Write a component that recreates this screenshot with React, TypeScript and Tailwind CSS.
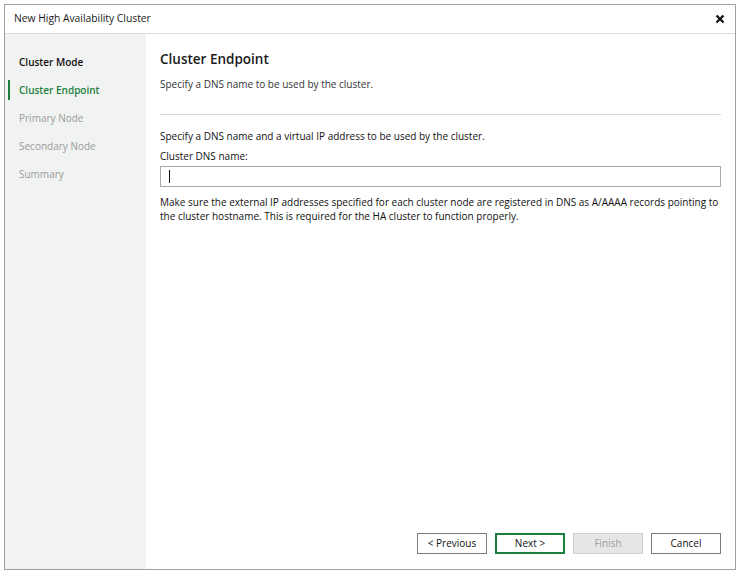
import React from "react";

const steps = [
  { label: "Cluster Mode", state: "done" },
  { label: "Cluster Endpoint", state: "active" },
  { label: "Primary Node", state: "todo" },
  { label: "Secondary Node", state: "todo" },
  { label: "Summary", state: "todo" },
];

export default function App() {
  return (
    <div
      className="w-[740px] h-[575px] bg-white pt-[4px] pl-[4px]"
      style={{ fontFamily: '"Open Sans", "Noto Sans", sans-serif' }}
    >
      <div className="w-[732px] h-[566px] border border-[#a0a0a0] flex flex-col bg-white">
        {/* title bar */}
        <div className="h-[29px] flex items-center justify-between pl-[9px] pr-[10px] border-b border-[#dcdcdc] shrink-0">
          <span className="text-[10.3px] text-[#1a1a1a]">New High Availability Cluster</span>
          <svg width="10" height="10" viewBox="0 0 10 10">
            <path d="M1.5 1.5 L8.5 8.5 M8.5 1.5 L1.5 8.5" stroke="#111" strokeWidth="2.2" />
          </svg>
        </div>

        <div className="flex flex-1 min-h-0">
          {/* sidebar */}
          <div className="w-[141px] bg-[#f1f2f2] pt-[14px] flex flex-col shrink-0">
            {steps.map((s) => (
              <div key={s.label} className="h-[28px] flex items-center relative pl-[14px]">
                {s.state === "active" && (
                  <span className="absolute left-[3px] top-[4px] w-[2px] h-[20px] bg-[#1a7f3c]" />
                )}
                <span
                  className={
                    "text-[10px] " +
                    (s.state === "done"
                      ? "text-[#111] font-semibold"
                      : s.state === "active"
                      ? "text-[#1a7f3c] font-semibold"
                      : "text-[#9a9a9a]")
                  }
                >
                  {s.label}
                </span>
              </div>
            ))}
          </div>

          {/* content */}
          <div className="flex-1 flex flex-col pl-[14px] pr-[14px]">
            <div className="pt-[15px] text-[13.5px] text-[#1a1a1a] font-semibold leading-[20px]">
              Cluster Endpoint
            </div>
            <div className="mt-[8px] text-[10px] text-[#333] leading-[14px]">
              Specify a DNS name to be used by the cluster.
            </div>
            <div className="mt-[23px] border-t border-[#d8d8d8]" />
            <div className="mt-[14px] text-[10px] text-[#111] leading-[14px]">
              Specify a DNS name and a virtual IP address to be used by the cluster.
            </div>
            <div className="mt-[6px] text-[10px] text-[#111] leading-[14px]">Cluster DNS name:</div>
            <div className="mt-[3px] h-[21px] border border-[#a8a8a8] flex items-center pl-[8px]">
              <span className="w-[1px] h-[13px] bg-[#111]" />
            </div>
            <div className="mt-[8px] text-[10px] text-[#111] leading-[14px]">
              Make sure the external IP addresses specified for each cluster node are registered in DNS as A/AAAA records pointing to
              the cluster hostname. This is required for the HA cluster to function properly.
            </div>

            <div className="mt-auto mb-[15px] flex justify-end gap-[8px]">
              <button className="w-[70px] h-[21px] border border-[#7a7a7a] bg-white text-[10px] text-[#111]">
                &lt; Previous
              </button>
              <button className="w-[70px] h-[21px] border-2 border-[#1a7f3c] bg-white text-[10px] text-[#111]">
                Next &gt;
              </button>
              <button className="w-[70px] h-[21px] border border-[#d0d0d0] bg-[#e6e6e6] text-[10px] text-[#a0a0a0]">
                Finish
              </button>
              <button className="w-[70px] h-[21px] border border-[#7a7a7a] bg-white text-[10px] text-[#111]">
                Cancel
              </button>
            </div>
          </div>
        </div>
      </div>
    </div>
  );
}
